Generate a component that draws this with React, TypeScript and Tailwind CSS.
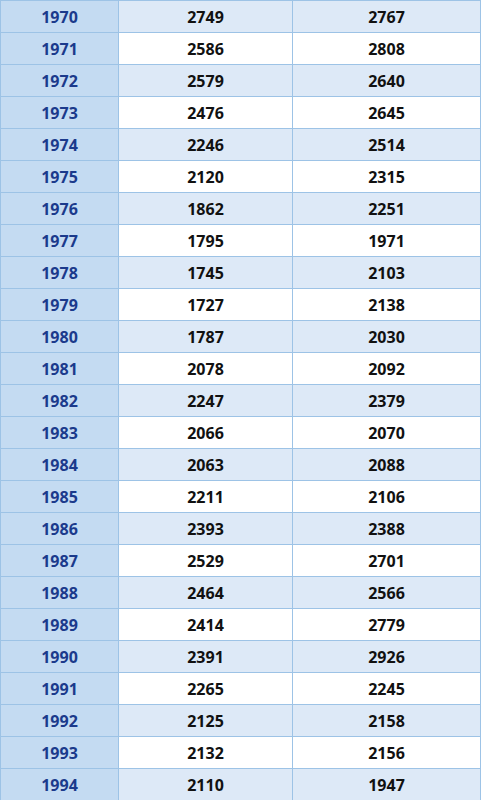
import React from 'react';

const rows: [number, number, number][] = [
  [1970, 2749, 2767],
  [1971, 2586, 2808],
  [1972, 2579, 2640],
  [1973, 2476, 2645],
  [1974, 2246, 2514],
  [1975, 2120, 2315],
  [1976, 1862, 2251],
  [1977, 1795, 1971],
  [1978, 1745, 2103],
  [1979, 1727, 2138],
  [1980, 1787, 2030],
  [1981, 2078, 2092],
  [1982, 2247, 2379],
  [1983, 2066, 2070],
  [1984, 2063, 2088],
  [1985, 2211, 2106],
  [1986, 2393, 2388],
  [1987, 2529, 2701],
  [1988, 2464, 2566],
  [1989, 2414, 2779],
  [1990, 2391, 2926],
  [1991, 2265, 2245],
  [1992, 2125, 2158],
  [1993, 2132, 2156],
  [1994, 2110, 1947],
];

const App: React.FC = () => {
  return (
    <div className="w-[481px] bg-white font-['Open_Sans','Noto_Sans',sans-serif]">
      <table className="w-[481px] border-collapse table-fixed">
        <colgroup>
          <col className="w-[118px]" />
          <col className="w-[174px]" />
          <col />
        </colgroup>
        <tbody>
          {rows.map(([year, a, b], i) => {
            const rowBg = i % 2 === 0 ? 'bg-[#dde9f7]' : 'bg-white';
            return (
              <tr key={year} className="h-[32px]">
                <td className="border border-[#9dc3e6] bg-[#c4dbf2] text-center text-[16px] font-bold text-[#1b3a8c] p-0 leading-none">
                  {year}
                </td>
                <td className={`border border-[#9dc3e6] ${rowBg} text-center text-[16px] font-bold text-[#111] p-0 leading-none`}>
                  {a}
                </td>
                <td className={`border border-[#9dc3e6] ${rowBg} text-center text-[16px] font-bold text-[#111] p-0 leading-none`}>
                  {b}
                </td>
              </tr>
            );
          })}
        </tbody>
      </table>
    </div>
  );
};

export default App;
